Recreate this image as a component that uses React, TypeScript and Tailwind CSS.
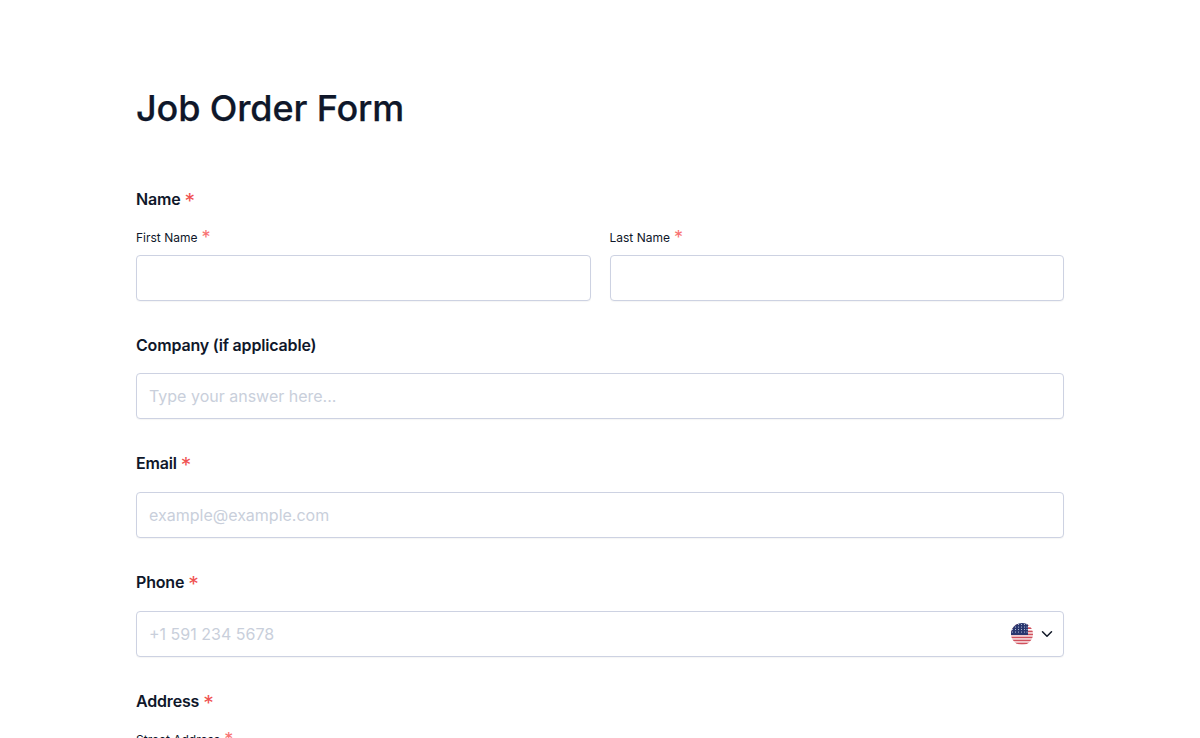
import { ChevronDown } from 'lucide-react';

function Required({ small }: { small?: boolean }) {
  return (
    <span className={small ? 'relative top-[2px] ml-[4px] text-[18px] leading-[0] text-[#f87171]' : 'relative top-[4px] ml-[4px] text-[21px] leading-[0] font-normal text-[#f05252]'}>*</span>
  );
}

function Field({ placeholder, right }: { placeholder?: string; right?: React.ReactNode }) {
  return (
    <div className="flex h-[46px] items-center rounded-[4px] border border-[#cdd2e2] bg-white pl-[12px] pr-[7px] shadow-[0_1px_1px_rgba(0,0,0,0.04)]">
      <input
        type="text"
        placeholder={placeholder}
        className="min-w-0 flex-1 bg-transparent text-[16px] text-[#111827] outline-none placeholder:text-[#c9cfdb]"
      />
      {right}
    </div>
  );
}

function UsFlag() {
  return (
    <svg width="22" height="22" viewBox="0 0 22 22" className="shrink-0">
      <defs>
        <clipPath id="flagCircle">
          <circle cx="11" cy="11" r="11" />
        </clipPath>
      </defs>
      <g clipPath="url(#flagCircle)">
        <rect width="22" height="22" fill="#fff" />
        {[1, 4.3, 7.6, 10.6, 13.6, 16.6, 19.6].map((y) => (
          <rect key={y} x="0" y={y} width="22" height="1.7" fill="#d0505c" />
        ))}
        <rect width="17" height="12" fill="#2a376f" />
        {[1.5, 4, 6.5, 9].map((y) =>
          [1.5, 4.5, 7.5, 10.5, 13.5, 16].map((x) => (
            <circle key={`${x}-${y}`} cx={x} cy={y} r="0.55" fill="#c9d0e6" />
          )),
        )}
      </g>
    </svg>
  );
}

export default function App() {
  return (
    <div className="h-screen overflow-hidden bg-white font-['Inter',sans-serif] text-[#0f172a]">
      <div className="mx-auto w-[928px] pt-[84px]">
        <h1 className="text-[36px] font-medium tracking-[-0.14px] leading-[48px] text-[#0f172a] [-webkit-text-stroke:0.25px_#0f172a]">Job Order Form</h1>

        <div className="mt-[55px] flex flex-col">
          <label className="text-[16px] font-semibold tracking-[-0.17px] leading-6">
            Name<Required />
          </label>
          <div className="mt-[18px] grid grid-cols-2 gap-[19px]">
            <div>
              <label className="block text-[12px] leading-[18px]">
                First Name<Required small />
              </label>
              <div className="mt-[8px]">
                <Field />
              </div>
            </div>
            <div>
              <label className="block text-[12px] leading-[18px]">
                Last Name<Required small />
              </label>
              <div className="mt-[8px]">
                <Field />
              </div>
            </div>
          </div>

          <label className="mt-[32px] text-[16px] font-semibold tracking-[-0.17px] leading-6">Company (if applicable)</label>
          <div className="mt-[16px]">
            <Field placeholder="Type your answer here..." />
          </div>

          <label className="mt-[32px] text-[16px] font-semibold tracking-[-0.17px] leading-6">
            Email<Required />
          </label>
          <div className="mt-[17px]">
            <Field placeholder="example@example.com" />
          </div>

          <label className="mt-[32px] text-[16px] font-semibold tracking-[-0.17px] leading-6">
            Phone<Required />
          </label>
          <div className="mt-[17px]">
            <Field
              placeholder="+1 591 234 5678"
              right={
                <div className="flex items-center gap-[5px]">
                  <UsFlag />
                  <ChevronDown size={18} strokeWidth={2} className="text-[#111827]" />
                </div>
              }
            />
          </div>

          <label className="mt-[32px] text-[16px] font-semibold tracking-[-0.17px] leading-6">
            Address<Required />
          </label>
          <label className="mt-[18px] block text-[12px] leading-[18px]">
            Street Address<Required small />
          </label>
        </div>
      </div>
    </div>
  );
}
